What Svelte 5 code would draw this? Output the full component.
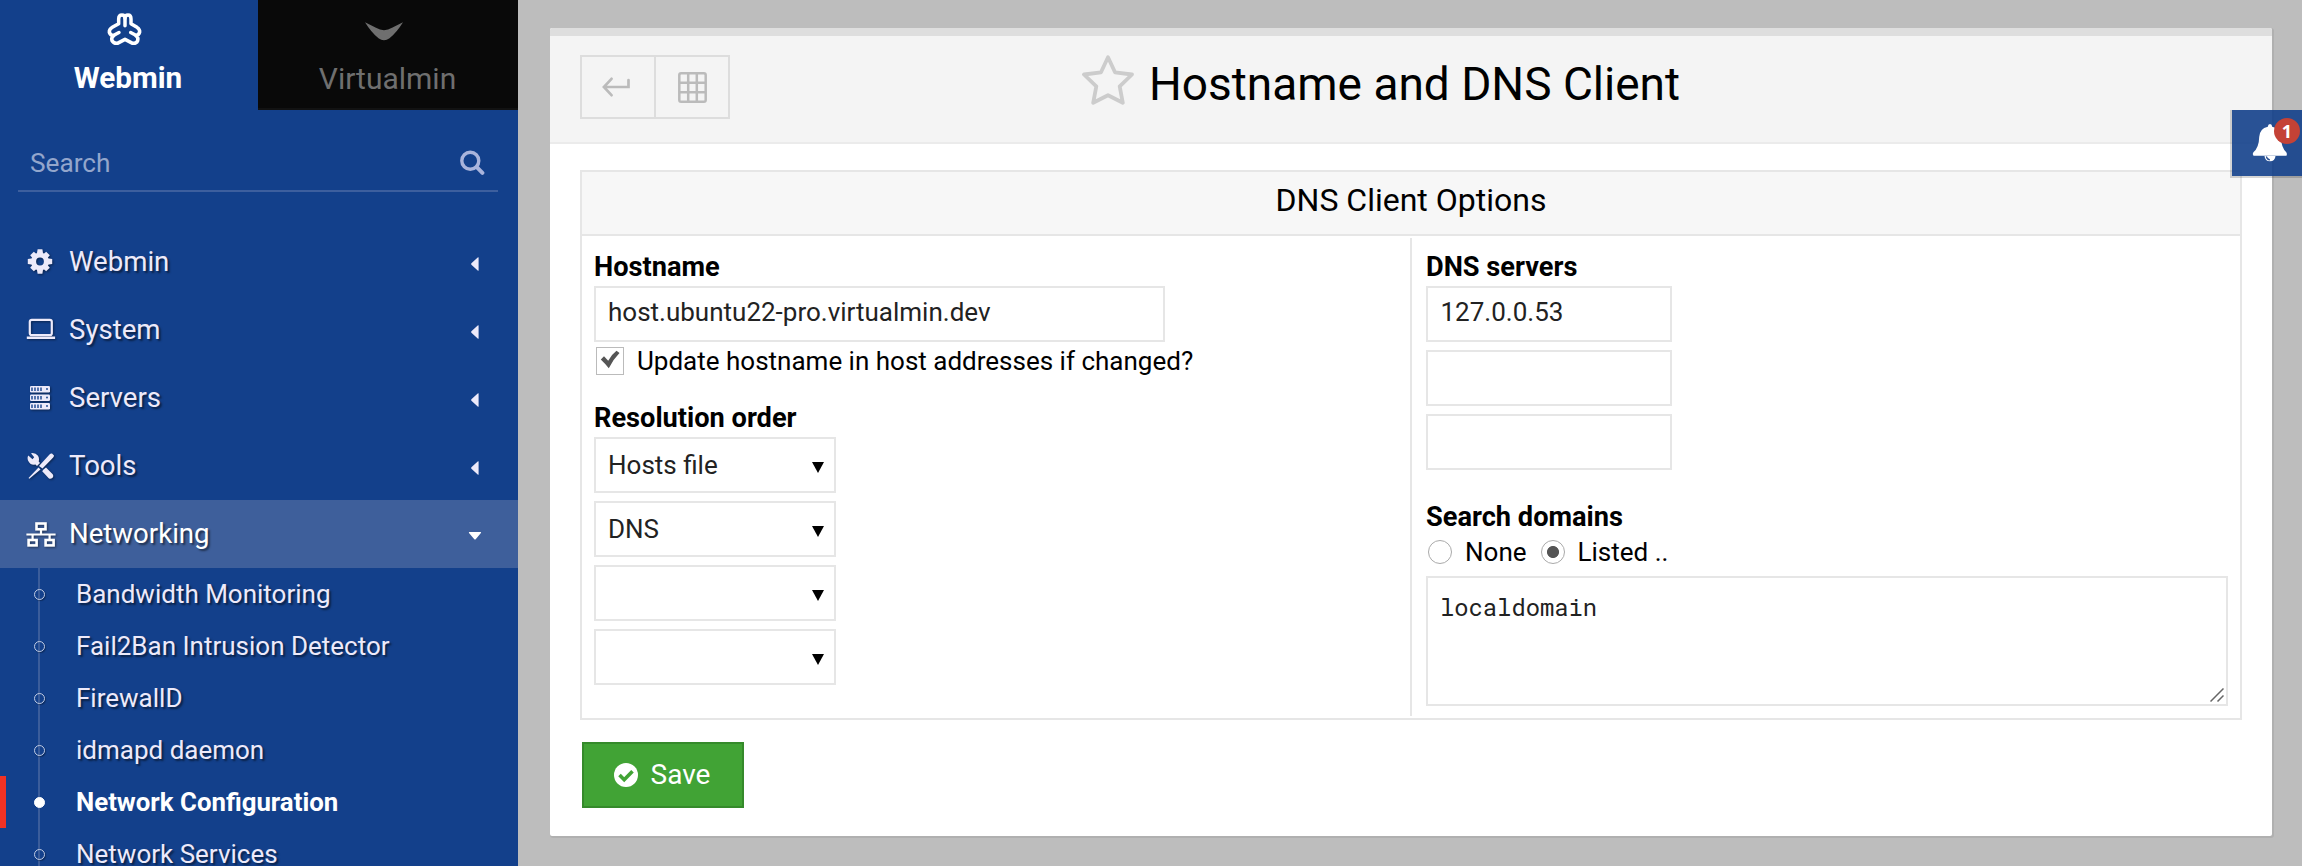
<script>
  const menu = [
    { label: 'Webmin', icon: 'gear' },
    { label: 'System', icon: 'laptop' },
    { label: 'Servers', icon: 'server' },
    { label: 'Tools', icon: 'tools' },
    { label: 'Networking', icon: 'network', open: true }
  ];
  const links = [
    'Bandwidth Monitoring',
    'Fail2Ban Intrusion Detector',
    'FirewallD',
    'idmapd daemon',
    'Network Configuration',
    'Network Services'
  ];
  const current = 'Network Configuration';
  const order = ['Hosts file', 'DNS', '', ''];
  const servers = ['127.0.0.53', '', ''];
</script>

<div class="page">
  <aside>
    <div class="tabs">
      <div class="tab on">
        <svg class="wlogo" width="50" height="48" viewBox="0 0 150 144" fill="none" stroke="#fff" stroke-width="10.500" stroke-linecap="round" stroke-linejoin="round">
          <path d="M56 56V42Q56 30 66 30 75 30 75 40 75 30 84 30 93 30 93 42V56L111 67Q120 73 119 81 117 90 108 92 116 97 113 107 109 116 98 115L75 103 52 115Q41 116 36 107 33 97 41 92 31 91 28 82 27 73 37 67Z" />
          <path d="M75 40V62M40 91.500 57 82.500M109 91.500 92 82.500" />
        </svg>
        <span>Webmin</span>
      </div>
      <div class="tab off">
        <svg class="vlogo" width="38" height="19" viewBox="0 0 38 19"><path fill="#6f6f6f" d="M0 .2 11 5.8Q19 10.600 27 5.800L38 .2Q32 10 24.500 16.300 19 20.400 13.500 16.300 6 10 0 .2z" /></svg>
        <span>Virtualmin</span>
      </div>
    </div>

    <div class="search">
      <span>Search</span>
      <svg width="25" height="25" viewBox="0 0 25 25" fill="none" stroke="#a9b4dc" stroke-width="3.4" stroke-linecap="round"><circle cx="10.3" cy="10.7" r="8.5" /><path d="m16.800 17.200 5.600 5.600" stroke-width="4" /></svg>
    </div>

    <nav>
      {#each menu as m}
        <div class="item" class:open={m.open}>
          <svg class="ico" width="30" height="28" viewBox="0 0 30 28">
            {#if m.icon === 'gear'}
              {#each [0, 90, 180, 270] as a}
                <path transform="rotate({a} 14 13.500)" d="M11.600 1.300h4.800l.8 5h-6.400z" />
                <path transform="rotate({a + 45} 14 13.500)" d="M11.400 2.200h5.200l.4 5h-6z" />
              {/each}
              <circle cx="14" cy="13.500" r="6.400" fill="none" stroke="currentColor" stroke-width="5" />
            {:else if m.icon === 'laptop'}
              <rect x="3.800" y="3.800" width="22" height="15.400" rx="2" fill="none" stroke="currentColor" stroke-width="2.200" />
              <path d="M.8 20.500h28.300v2.200q0 .4-.5.4H1.300q-.5 0-.5-.4z" />
            {:else if m.icon === 'server'}
              {#each [2, 10.500, 19] as y}
                <rect x="4" {y} width="20" height="6.600" rx="1.300" />
                {#each [6, 9, 12, 15] as x}
                  <path d="M{x} {y + 1.5}v3.600" stroke="#13408b" stroke-width="1.400" />
                {/each}
                <circle cx="21" cy={y + 3} r=".9" fill="#13408b" />
              {/each}
            {:else if m.icon === 'tools'}
              <path d="M3.300 26.800 2.500 26 12.500 15.500 14.500 17.500zM13 14 23.500 2.500Q24.600 1.200 26 1.500L28 3.500Q28 4.700 27.200 5.500L16.500 16.500zM2 8.500Q1 5.500 2.300 3.400L6.500 7.200 8.200 5.200 5 1.200Q9.500 .5 12 3.800 13.600 6.400 12.700 9.500L14 11 11 14 9.500 12.600Q4.200 13.600 2 8.500zM17.500 17.500 20 15.500 26.700 22.300Q28 24.500 26.300 26 24.500 27.500 22.700 26.300L16.200 19.300z" />
            {:else}
              <g fill="none" stroke="currentColor" stroke-width="2.600">
                <rect x="10.500" y="3.500" width="9" height="5.800" />
                <rect x="2.600" y="20" width="8" height="5.400" />
                <rect x="19.600" y="20" width="8" height="5.400" />
                <path d="M15 9v5.500M.4 14.500h29.200M6.600 14v6M23.600 14v6" stroke-width="2.200" />
              </g>
            {/if}
          </svg>
          <span>{m.label}</span>
          {#if m.open}
            <svg class="caret" width="14" height="10" viewBox="0 0 14 10"><path d="M1.300 1h11.400q.8.300.2 1L7.700 8.200q-.7.600-1.400 0L1 2q-.4-.8.300-1z" /></svg>
          {:else}
            <svg class="caret left" width="10" height="16" viewBox="0 0 10 16"><path d="M8.600 1.400v13.200q-.3.500-.9 0L1.400 8.700q-.6-.7 0-1.400L7.700 1.400q.6-.5.900 0z" /></svg>
          {/if}
        </div>
      {/each}
      <div class="sub">
        {#each links as l}
          <div class="link" class:cur={l === current}><i></i><span>{l}</span></div>
        {/each}
      </div>
    </nav>
  </aside>

  <main>
    <section class="panel">
      <header>
        <div class="btns">
          <div class="btn">
            <svg class="ret" width="28" height="20" viewBox="0 0 28 20" fill="none" stroke="#bbb" stroke-width="2.700" stroke-linecap="round"><path d="M9.500 1.800 1.900 10l7.600 8.200M2.200 10h24.300V3" /></svg>
          </div>
          <div class="btn">
            <svg width="29" height="31" viewBox="0 0 29 31" fill="none" stroke="#bbb" stroke-width="2.500"><rect x="1.300" y="1.300" width="26.400" height="28.400" rx="1.800" /><path d="M10.200 1v29M18.800 1v29M1 10.800h27M1 20.200h27" /></svg>
          </div>
        </div>
        <h1>
          <svg width="52" height="50" viewBox="0 0 52 50" fill="none" stroke="#ccc" stroke-width="3.800" stroke-linejoin="round"><path d="M26 2.200 33 17.300 50 19.500 37.700 31.300 40.800 47.800 26 40.200 11.200 47.800 14.300 31.300 2 19.500 19 17.300z" /></svg>
          <span>Hostname and DNS Client</span>
        </h1>
      </header>

      <div class="table">
        <div class="thead">DNS Client Options</div>
        <div class="cols">
          <div class="col a">
            <b>Hostname</b>
            <div class="field host">host.ubuntu22-pro.virtualmin.dev</div>
            <div class="check">
              <span class="box"><svg width="20" height="19" viewBox="0 0 20 19"><path fill="#555" d="M.8 9.500 4 6.300l4.200 4.500Q11.500 4.500 16.500.8L19.500 3Q13 9.500 8.800 18.300 5.500 14 .8 9.500z" /></svg></span>
              <span>Update hostname in host addresses if changed?</span>
            </div>
            <b>Resolution order</b>
            <div class="stack">
              {#each order as o}
                <div class="field select"><span>{o}</span><svg width="12" height="11" viewBox="0 0 12 11"><path d="M0 0h12L6 11z" /></svg></div>
              {/each}
            </div>
          </div>
          <div class="col b">
            <b>DNS servers</b>
            <div class="stack">
              {#each servers as s}
                <div class="field dns">{s}</div>
              {/each}
            </div>
            <b class="sd">Search domains</b>
            <div class="radios">
              <i></i><span class="none">None</span><i class="sel"></i><span>Listed ..</span>
            </div>
            <div class="area">
              <span>localdomain</span>
              <svg width="14" height="14" viewBox="0 0 14 14" stroke="#666" stroke-width="1.500"><path d="M.5 13.500 13.500.5M7.500 13.500l6-6" /></svg>
            </div>
          </div>
        </div>
      </div>

      <div class="save">
        <svg width="24" height="24" viewBox="0 0 24 24"><circle cx="12" cy="12" r="12" fill="#fff" /><path d="m5.500 12 4.700 4.700 8.300-8.500" fill="none" stroke="#41a335" stroke-width="3.600" /></svg>
        <span>Save</span>
      </div>
    </section>
  </main>

  <div class="bell">
    <svg width="36" height="39" viewBox="0 0 36 39"><path fill="#fff" d="M18 0q2 0 2.200 2.700Q28.500 4.500 28.900 13 29.200 23.500 34.300 28.300 35.500 30 34.500 31.800H1.500Q0 30 1.400 28.300 7 23.500 7.200 13 7.600 4.500 15.800 2.700 16 0 18 0zM12.500 32h11q-.5 5.300-5.500 5.300T12.500 32z" /><path d="M14.300 32.500q.8 3 3.600 3.300" fill="none" stroke="#2b5193" stroke-width="1.200" /></svg>
    <em>1</em>
  </div>
</div>

<style>
  :global(body) { background: #bdbdbd; overflow: hidden; }
  .page {
    position: relative;
    display: flex;
    width: 2302px;
    height: 866px;
    overflow: hidden;
    background: #bdbdbd;
    color: #000;
    font: 26px Roboto, sans-serif;
  }
  svg { display: block; flex: none; }
  span { white-space: pre; }

  aside { width: 518px; height: 866px; flex: none; background: #13408b; overflow: hidden; }
  .tabs { display: flex; height: 110px; }
  .tab { display: flex; flex-direction: column; align-items: center; box-sizing: border-box; height: 110px; line-height: 36px; }
  .on { width: 258px; color: #fff; font-size: 29.700px; font-weight: 700; padding: 5px 2px 0 0; }
  .wlogo { margin: 0 6px 0 0; }
  .on span { margin-top: 7px; }
  .off { width: 260px; background: #090909; border-bottom: 2px solid #121212; color: #6f6f6f; font-size: 30px; padding: 22px 1px 0 0; }
  .vlogo { margin-right: 8px; }
  .off span { margin-top: 20px; }
  .search {
    display: flex; justify-content: space-between; align-items: center;
    margin: 30px 20px 36px 18px; padding: 0 13px 6px 12px;
    box-sizing: border-box; height: 52px;
    border-bottom: 2px solid #3d5f9e; color: #93a6cc; font-size: 26.200px;
  }
  .search span { padding-top: 2px; }

  .item {
    display: flex; align-items: center; height: 68px; padding: 0 36px 0 26px;
    color: #edeafa; font-size: 27.600px; line-height: 68px; text-shadow: 2px 2px 2px rgba(0, 0, 0, .5);
  }
  .ico { fill: currentColor; margin-right: 13px; filter: drop-shadow(1px 1px 1px rgba(0, 0, 0, .45)); }
  .caret { margin-left: auto; margin-top: 4px; fill: currentColor; }
  .caret.left { margin-right: 2px; }
  .open { background: #3e5f9b; color: #fff; }
  .sub { background: linear-gradient(#3b5d9b, #3b5d9b) 38px 0 / 2px 100% no-repeat; }
  .link {
    display: flex; align-items: center; height: 52px; box-sizing: border-box; padding-left: 33.500px;
    border-left: 0 solid #f03224; color: #edeafa; line-height: 52px; text-shadow: 2px 2px 2px rgba(0, 0, 0, .5);
  }
  .link i { box-sizing: border-box; width: 11px; height: 11px; margin-right: 31.500px; border: 1.500px solid #c0cbe3; border-radius: 50%; box-shadow: 1px 1px 1px rgba(0, 0, 0, .3); }
  .cur { border-left-width: 6px; padding-left: 27.500px; color: #fff; font-size: 25.800px; font-weight: 700; text-shadow: none; }
  .cur i { background: #fff; border-color: #fff; box-shadow: none; }

  main { flex: 1; padding: 28px 30px 30px 32px; }
  .panel { box-sizing: border-box; height: 808px; background: #fff; border-radius: 2px; box-shadow: 1px 1px 0 1px #b0b0b0; }
  header {
    display: flex; box-sizing: border-box; height: 116px; padding: 19px 30px 0;
    background: #f4f4f4; border-top: 8px solid #dedede; border-bottom: 2px solid #ebebeb;
    border-radius: 2px 2px 0 0;
  }
  .btns { display: flex; box-sizing: border-box; width: 150px; height: 64px; border: 2px solid #ddd; }
  .btn { flex: 1; display: flex; align-items: center; justify-content: center; }
  .ret { margin-right: 5px; }
  .btn + .btn { border-left: 2px solid #ddd; }
  h1 { display: flex; flex: 1; margin: 0 0 0 352px; font-size: 46px; font-weight: 400; line-height: 58px; }
  h1 span { margin-left: 15px; }

  .table { box-sizing: border-box; margin: 26px 30px 0; height: 550px; border: 2px solid #e6e6e6; }
  .thead { height: 64px; box-sizing: border-box; background: #f7f7f7; border-bottom: 2px solid #e6e6e6; text-align: center; font-size: 32px; line-height: 56px; }
  .cols { display: flex; height: 482px; }
  .col { box-sizing: border-box; padding: 14px 12px 0; }
  .a { width: 828px; }
  .b { flex: 1; margin: 2px 0; padding: 12px 12px 0 14px; border-left: 2px solid #e6e6e6; }
  b { display: block; height: 34px; margin-bottom: 2px; font-size: 27.200px; line-height: 35px; font-weight: 700; }
  .field { box-sizing: border-box; height: 56px; border: 2px solid #e6e6e6; padding: 0 12px; line-height: 48px; color: #222; }
  .host { width: 571px; }
  .check { display: flex; align-items: center; height: 32px; margin: 3px 0 24px 2px; }
  .box { box-sizing: border-box; display: flex; justify-content: center; width: 28px; height: 28px; padding-top: 2px; margin-right: 13px; border: 1.500px solid #bbb; }
  .stack { display: flex; flex-direction: column; gap: 8px; }
  .select { display: flex; justify-content: space-between; align-items: center; width: 242px; padding-right: 10px; }
  .select span { padding-bottom: 1px; }
  .select svg { margin-top: 4px; }
  .dns { width: 246px; padding-left: 12.500px; }
  .sd { margin-top: 30px; }
  .radios { display: flex; align-items: center; height: 32px; padding-left: 2px; margin-bottom: 8px; }
  .radios i { box-sizing: border-box; width: 24px; height: 24px; margin-right: 13px; border: 1.500px solid #aaa; border-radius: 50%; }
  .radios .none { margin-right: 14px; }
  .radios .sel { background: radial-gradient(circle, #555 5.600px, #fff 6.400px); }
  .area { display: flex; justify-content: space-between; box-sizing: border-box; width: 802px; height: 130px; border: 2px solid #e6e6e6; padding: 12px 2px 2px 12px; color: #222; font: 23.800px/34px 'Roboto Mono', 'DejaVu Sans Mono', monospace; }
  .area svg { align-self: flex-end; }

  .save {
    display: flex; align-items: center; box-sizing: border-box; width: 162px; height: 66px;
    margin: 22px 0 0 32px; padding-left: 30px; border: 2px solid #358a2b; background: #41a335; color: #fff; font-size: 28px;
  }
  .save span { margin: 0 0 2px 12.500px; }

  .bell {
    position: absolute; left: 2232px; top: 110px; width: 70px; height: 66px; box-sizing: border-box;
    padding: 14px 0 0 20px; background: rgba(19, 64, 139, .9); box-shadow: -1px 1px 0 1px rgba(0, 0, 0, .16);
  }
  .bell em {
    position: absolute; left: 42px; top: 8px; width: 26px; height: 26px; border-radius: 50%;
    background: #c44236; color: #fff; font: 700 18px/26px 'Open Sans', sans-serif; text-align: center;
  }
</style>
